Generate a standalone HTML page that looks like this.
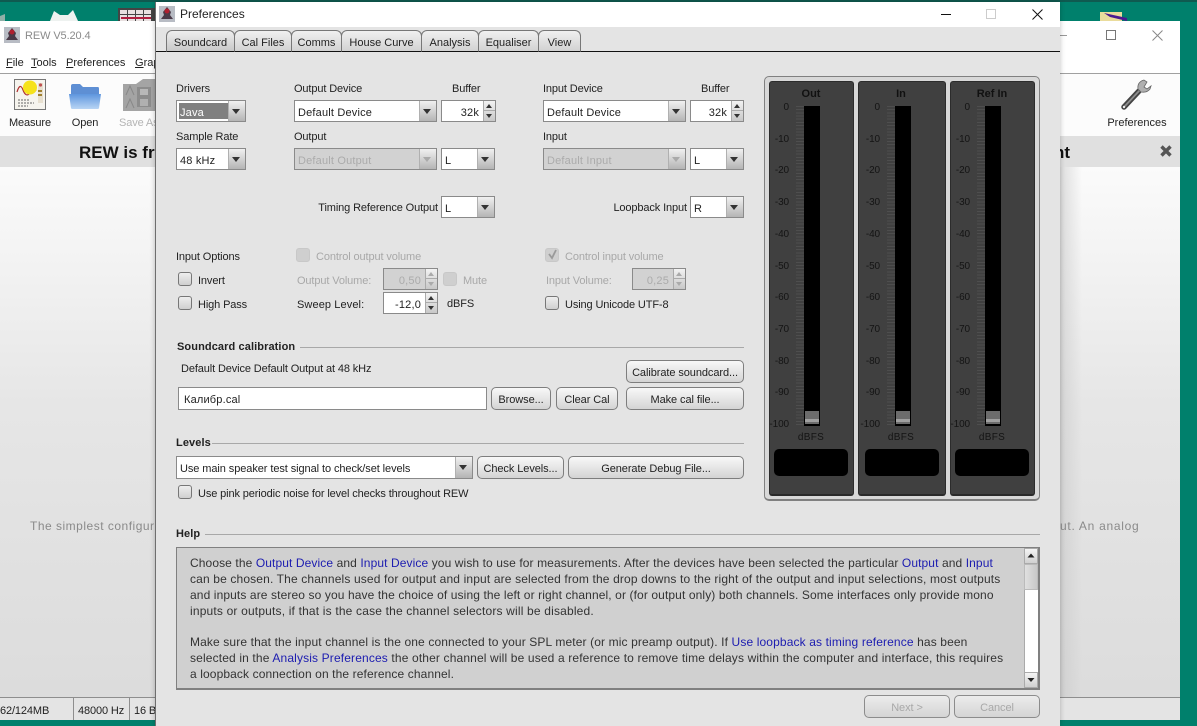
<!DOCTYPE html>
<html><head><meta charset="utf-8"><style>
html,body{margin:0;padding:0}
body{position:relative;width:1197px;height:726px;overflow:hidden;background:#00806c;font:11px "Liberation Sans",Arial,sans-serif;color:#222;-webkit-font-smoothing:antialiased}
div,span{position:absolute;box-sizing:border-box;white-space:nowrap}
svg{position:absolute;overflow:visible}
.t{line-height:14px;height:14px;letter-spacing:-.12px;margin-top:1px}
.d{color:#a8a8a8}
.c{text-align:center}
.r{text-align:right}
.combo{background:#fff;border:1px solid #8a8a8a;height:22px;line-height:24px;padding-left:3px;letter-spacing:.18px}
.combo.dis{background:#d2d2d2;color:#ababab}
.ar{right:0;top:0;width:17px;height:20px;background:linear-gradient(#f0f0f0,#b4b4b4);border-left:1px solid #b0b0b0}
.ar:after{content:"";position:absolute;left:3px;top:8px;border:4.5px solid transparent;border-top:5px solid #333;border-bottom:0}
.dis .ar:after{border-top-color:#aaa}
.sp{background:#fff;border:1px solid #8a8a8a;height:22px;line-height:24px;text-align:right;letter-spacing:.18px}
.sp.dis{background:#d2d2d2;color:#ababab}
.spb{right:0;top:0;width:12px;height:20px;background:linear-gradient(#f2f2f2,#c8c8c8);border-left:1px solid #aaa}
.spb:before{content:"";position:absolute;left:2px;top:3px;border:3px solid transparent;border-bottom:4px solid #333;border-top:0}
.spb:after{content:"";position:absolute;left:2px;top:13px;border:3px solid transparent;border-top:4px solid #333;border-bottom:0}
.spb i{position:absolute;left:0;right:0;top:9px;height:1px;background:#aaa}
.dis .spb:before{border-bottom-color:#aaa}.dis .spb:after{border-top-color:#aaa}
.cb{width:14px;height:14px;border:1px solid #777;border-radius:3px;background:linear-gradient(#eee,#cfcfcf)}
.cb.dis{border-color:#c8c8c8;background:#cfcfcf}
.btn{border:1px solid #7e7e7e;border-radius:5px;background:linear-gradient(#f8f8f8,#d4d4d4);text-align:center;line-height:25px;height:23px;letter-spacing:-.08px}
.btn.dis{color:#a8a8a8;border-color:#8c8c8c;background:linear-gradient(#ececec,#d4d4d4)}
.tab{top:30px;height:22px;border:1px solid #777;border-bottom:1px solid #111;border-radius:6px 6px 0 0;background:linear-gradient(#f0f0f0,#d2d2d2);text-align:center;line-height:24px;letter-spacing:0;border-top-right-radius:6px}
.h{font-weight:bold;letter-spacing:.1px;color:#222}
.ln{height:1px;background:#a8a8a8}
.hl{left:190px;line-height:16px;height:16px;font-size:12px;letter-spacing:.11px;color:#333}
b.l{font-weight:normal;color:#1c1cb0}
.panel{top:81px;height:415px;background:#404040;border:1px solid #2c2c2c;border-bottom:2px solid #2a2a2a;border-radius:3px}
.m{font-size:10px;color:#141414;line-height:12px;height:12px;text-align:right;width:24px;letter-spacing:-.1px;margin-top:1px}
.bar{top:106px;width:16px;height:320px;background:#000}
.hd{top:411px;width:14px;height:13px;background:linear-gradient(#6c6c6c 0,#6c6c6c 8px,#a0a0a0 8px,#a0a0a0 11px,#6c6c6c 11px)}
.tk{top:106px;width:8px;height:319px;background:repeating-linear-gradient(#4e4e4e 0,#4e4e4e 1px,transparent 1px,transparent 3.18px)}
.box{top:449px;width:74px;height:27px;background:#000;border-radius:5px}
.db{top:432px;width:60px;text-align:center;font-size:10px;letter-spacing:.3px;color:#141414;line-height:12px}
.mt{font-weight:bold;color:#111;width:60px;text-align:center;top:88px;line-height:13px}
</style></head><body>

<!-- desktop -->
<div style="left:0;top:0;width:1197px;height:2px;background:#0f5a50"></div>
<svg style="left:0;top:0" width="1197" height="21"><path d="M50 21 L54 11 L60 15 L68 15 L73 10 L78 21Z" fill="#eef2f0"/><rect x="118" y="8" width="38" height="13" fill="#444"/><path d="M120 10h7v4h-7zM128 10h7v4h-7zM136 10h7v4h-7zM144 10h7v4h-7zM120 15h7v6h-7zM128 15h7v6h-7zM136 15h7v6h-7zM144 15h7v6h-7z" fill="#e8e0e0"/><rect x="121" y="17" width="30" height="2" fill="#b02040"/><rect x="1100" y="12" width="22" height="9" fill="#eadc9c"/><path d="M1104 13 L1127 18 L1127 21 L1110 17Z" fill="#4a1a90"/><path d="M0 16 L5 14 V21 H0Z" fill="#90b0a8"/></svg>

<!-- main REW window -->
<div style="left:0;top:21px;width:1180px;height:699px;background:#fff"></div>
<svg style="left:4px;top:27px" width="16" height="16"><rect width="16" height="16" fill="#b8bcc4"/><path d="M8 1 L12 6 L11 9 L14 13 H2 L5 9 L4 6Z" fill="#4a3a48"/><circle cx="8" cy="5" r="2.5" fill="#b02030"/></svg>
<div class="t" style="left:25px;top:28px;font-size:11px;color:#8a8a8a;letter-spacing:-.1px">REW V5.20.4</div>
<div style="left:1057px;top:35px;width:10px;height:1px;background:#999"></div>
<div style="left:1106px;top:30px;width:10px;height:10px;border:1px solid #777"></div>
<svg style="left:1152px;top:30px" width="11" height="11"><path d="M.5 .5L10.5 10.5M10.5 .5L.5 10.5" stroke="#888"/></svg>
<div class="t" style="left:6px;top:55px;letter-spacing:0"><u>F</u>ile</div>
<div class="t" style="left:31px;top:55px;letter-spacing:0"><u>T</u>ools</div>
<div class="t" style="left:66px;top:55px;letter-spacing:0"><u>P</u>references</div>
<div class="t" style="left:135px;top:55px;letter-spacing:0"><u>G</u>raph</div>
<div style="left:0;top:73px;width:1180px;height:1px;background:#a0a0a0"></div>
<div style="left:0;top:74px;width:1180px;height:62px;background:#fcfcfc"></div>

<!-- Measure icon -->
<svg style="left:14px;top:79px" width="32" height="32"><rect x=".5" y=".5" width="31" height="30" fill="#f6f4ee" stroke="#777"/><path d="M3 13 Q6 3 9 11 T16 14 T22 12" fill="none" stroke="#b03030" stroke-width="1.2"/><path d="M4 21h12M4 24h16M4 27h10" stroke="#666" stroke-dasharray="2 1"/><rect x="24" y="4" width="5" height="20" fill="#e8e0d0"/><circle cx="26.5" cy="6" r="1.6" fill="#c05050"/><path d="M24 12h4M24 16h4" stroke="#a08030" stroke-width="2"/><circle cx="16" cy="8.5" r="7" fill="#f6e21a"/></svg>
<div class="t c" style="left:4px;top:115px;width:52px">Measure</div>
<!-- Open icon -->
<svg style="left:69px;top:83px" width="32" height="28"><path d="M2 3 Q2 1 4 1 H11 L14 4 H29 Q30 4 30 6 V14 H2Z" fill="#5e8fd4"/><path d="M0 11 H32 L30 25 Q30 26 28 26 H4 Q2 26 2 25Z" fill="url(#fo)"/><defs><linearGradient id="fo" x1="0" y1="0" x2="0" y2="1"><stop offset="0" stop-color="#5e96de"/><stop offset="1" stop-color="#b8d4f4"/></linearGradient></defs></svg>
<div class="t c" style="left:59px;top:115px;width:52px">Open</div>
<!-- Save icon -->
<svg style="left:123px;top:79px" width="33" height="32"><path d="M0 5 H13 L20 0 H33 V32 H0Z" fill="#a4a4a4"/><path d="M3 16 L7 7 L11 16M3 29 L7 20 L11 29" fill="none" stroke="#888"/><rect x="14" y="8" width="14" height="20" fill="#8c8c8c"/><rect x="17" y="20" width="8" height="7" fill="#b0b0b0"/><rect x="17" y="10" width="8" height="6" fill="#b8b8b8"/></svg>
<div class="t" style="left:119px;top:115px;color:#b4b4b4">Save As</div>
<!-- Wrench -->
<svg style="left:1120px;top:78px" width="34" height="34"><path d="M4 29 L19 13" stroke="#444" stroke-width="5.5" stroke-linecap="round"/><path d="M5 28 L19 13" stroke="#8e8e8e" stroke-width="1.8" stroke-linecap="round"/><path d="M24 2 Q17 4 18 11 L21 14 Q27 15 30 11 L31 8 L27 11 L24 9 L27 4Z" fill="#b0b0b0" stroke="#666" stroke-width=".8"/><circle cx="4" cy="29" r="1.2" fill="#eee"/></svg>
<div class="t c" style="left:1102px;top:115px;width:70px;letter-spacing:0">Preferences</div>

<!-- grey band -->
<div style="left:0;top:136px;width:1180px;height:31px;background:#e0e0e0"></div>
<div style="left:79px;top:143px;font-size:17px;font-weight:bold;color:#111;line-height:20px">REW is free</div>
<div style="left:1054px;top:143px;font-size:17px;font-weight:bold;color:#111;line-height:20px">nt</div>
<svg style="left:1160px;top:145px" width="12" height="12"><path d="M1.5 1.5L10.5 10.5M10.5 1.5L1.5 10.5" stroke="#555" stroke-width="3.4"/></svg>
<!-- body -->
<div style="left:0;top:167px;width:1180px;height:530px;background:linear-gradient(#fbfbfb 0,#e6e6e6 45%,#dcdcdc 100%)"></div>
<div style="left:1060px;top:167px;width:22px;height:530px;background:linear-gradient(90deg,rgba(200,200,200,.6),rgba(220,220,220,0))"></div>
<div style="left:30px;top:519px;font-size:12px;color:#8a8a8a;line-height:15px;letter-spacing:.5px">The simplest configuration</div>
<div style="left:1060px;top:519px;font-size:12px;color:#8a8a8a;line-height:15px;letter-spacing:.72px">ut. An analog</div>
<div style="left:0;top:697px;width:1180px;height:23px;background:#e4e4e4;border-top:1px solid #8e8e8e"></div>
<div style="left:73px;top:697px;width:1px;height:23px;background:#8e8e8e"></div>
<div style="left:129px;top:697px;width:1px;height:23px;background:#8e8e8e"></div>
<div class="t" style="left:0;top:703px">62/124MB</div>
<div class="t" style="left:78px;top:703px">48000 Hz</div>
<div class="t" style="left:134px;top:703px">16 Bit</div>

<!-- Preferences dialog -->
<div style="left:155px;top:2px;width:905px;height:724px;background:#e4e4e4;border-left:1px solid #6e6e6e;box-shadow:0 0 5px rgba(0,0,0,.25)"></div>
<div style="left:156px;top:2px;width:904px;height:25px;background:#fff"></div>
<svg style="left:159px;top:6px" width="16" height="16"><rect width="16" height="16" fill="#b8bcc4"/><path d="M8 1 L12 6 L11 9 L14 13 H2 L5 9 L4 6Z" fill="#4a3a48"/><circle cx="8" cy="5" r="2.5" fill="#b02030"/></svg>
<div class="t" style="left:180px;top:6px;font-size:12px;letter-spacing:0;color:#222">Preferences</div>
<div style="left:941px;top:14px;width:10px;height:1px;background:#111"></div>
<div style="left:986px;top:9px;width:10px;height:10px;border:1px solid #ccc"></div>
<svg style="left:1032px;top:9px" width="11" height="11"><path d="M.5 .5L10.5 10.5M10.5 .5L.5 10.5" stroke="#111"/></svg>

<div style="left:156px;top:51px;width:904px;height:1px;background:#111"></div>
<div class="tab" style="left:166px;width:69px;background:linear-gradient(#eee,#c8c8c8)">Soundcard</div>
<div class="tab" style="left:234px;width:58px">Cal Files</div>
<div class="tab" style="left:291px;width:51px">Comms</div>
<div class="tab" style="left:341px;width:81px">House Curve</div>
<div class="tab" style="left:421px;width:58px">Analysis</div>
<div class="tab" style="left:478px;width:61px">Equaliser</div>
<div class="tab" style="left:538px;width:43px">View</div>

<div class="t" style="left:176px;top:81px">Drivers</div>
<div class="combo" style="left:176px;top:100px;width:70px;color:#fff"><span style="left:2px;top:2px;width:49px;height:16px;background:#808080;line-height:20px;padding-left:1px;overflow:hidden">Java</span><span class="ar"></span></div>
<div class="t" style="left:176px;top:129px">Sample Rate</div>
<div class="combo" style="left:176px;top:148px;width:70px">48 kHz<span class="ar"></span></div>

<div class="t" style="left:294px;top:81px">Output Device</div>
<div class="t" style="left:452px;top:81px">Buffer</div>
<div class="combo" style="left:294px;top:100px;width:143px">Default Device<span class="ar"></span></div>
<div class="sp" style="left:441px;top:100px;width:55px;padding-right:16px">32k<span class="spb"><i></i></span></div>
<div class="t" style="left:294px;top:129px">Output</div>
<div class="combo dis" style="left:294px;top:148px;width:143px">Default Output<span class="ar"></span></div>
<div class="combo" style="left:441px;top:148px;width:54px">L<span class="ar"></span></div>
<div class="t r" style="left:290px;top:200px;width:148px">Timing Reference Output</div>
<div class="combo" style="left:441px;top:196px;width:54px">L<span class="ar"></span></div>

<div class="t" style="left:543px;top:81px">Input Device</div>
<div class="t" style="left:701px;top:81px">Buffer</div>
<div class="combo" style="left:543px;top:100px;width:143px">Default Device<span class="ar"></span></div>
<div class="sp" style="left:690px;top:100px;width:54px;padding-right:16px">32k<span class="spb"><i></i></span></div>
<div class="t" style="left:543px;top:129px">Input</div>
<div class="combo dis" style="left:543px;top:148px;width:143px">Default Input<span class="ar"></span></div>
<div class="combo" style="left:690px;top:148px;width:54px">L<span class="ar"></span></div>
<div class="t r" style="left:590px;top:200px;width:97px">Loopback Input</div>
<div class="combo" style="left:690px;top:196px;width:54px">R<span class="ar"></span></div>

<div class="t" style="left:176px;top:249px">Input Options</div>
<div class="cb" style="left:178px;top:272px"></div>
<div class="t" style="left:198px;top:273px">Invert</div>
<div class="cb" style="left:178px;top:296px"></div>
<div class="t" style="left:198px;top:297px">High Pass</div>

<div class="cb dis" style="left:296px;top:248px"></div>
<div class="t d" style="left:316px;top:249px">Control output volume</div>
<div class="t d" style="left:297px;top:273px">Output Volume:</div>
<div class="sp dis" style="left:383px;top:268px;width:55px;padding-right:16px">0,50<span class="spb"><i></i></span></div>
<div class="cb dis" style="left:443px;top:272px"></div>
<div class="t d" style="left:463px;top:273px">Mute</div>
<div class="t" style="left:297px;top:297px;letter-spacing:.1px">Sweep Level:</div>
<div class="sp" style="left:383px;top:292px;width:55px;padding-right:16px">-12,0<span class="spb"><i></i></span></div>
<div class="t" style="left:447px;top:296px">dBFS</div>

<div class="cb dis" style="left:545px;top:248px"></div>
<svg style="left:547px;top:249px" width="11" height="11"><path d="M2 5 L5 9 L9 1" fill="none" stroke="#9a9a9a" stroke-width="1.8"/></svg>
<div class="t d" style="left:565px;top:249px">Control input volume</div>
<div class="t d" style="left:546px;top:273px">Input Volume:</div>
<div class="sp dis" style="left:632px;top:268px;width:54px;padding-right:16px">0,25<span class="spb"><i></i></span></div>
<div class="cb" style="left:545px;top:296px"></div>
<div class="t" style="left:565px;top:297px">Using Unicode UTF-8</div>

<div class="t h" style="left:177px;top:339px">Soundcard calibration</div>
<div class="ln" style="left:300px;top:347px;width:444px"></div>
<div class="t" style="left:181px;top:361px">Default Device Default Output at 48 kHz</div>
<div class="btn" style="left:626px;top:360px;width:118px">Calibrate soundcard...</div>
<div style="left:178px;top:387px;width:309px;height:23px;background:#fff;border:1px solid #8a8a8a;line-height:25px;padding-left:5px;letter-spacing:.18px">Калибр.cal</div>
<div class="btn" style="left:491px;top:387px;width:60px">Browse...</div>
<div class="btn" style="left:556px;top:387px;width:62px">Clear Cal</div>
<div class="btn" style="left:626px;top:387px;width:118px">Make cal file...</div>

<div class="t h" style="left:176px;top:435px">Levels</div>
<div class="ln" style="left:212px;top:443px;width:532px"></div>
<div class="combo" style="left:176px;top:456px;width:297px;height:23px;line-height:25px;letter-spacing:-.08px">Use main speaker test signal to check/set levels<span class="ar" style="height:21px"></span></div>
<div class="btn" style="left:477px;top:456px;width:87px">Check Levels...</div>
<div class="btn" style="left:568px;top:456px;width:176px">Generate Debug File...</div>
<div class="cb" style="left:178px;top:485px"></div>
<div class="t" style="left:198px;top:486px">Use pink periodic noise for level checks throughout REW</div>

<!-- Meters -->
<div style="left:764px;top:76px;width:276px;height:425px;background:#d8d8d8;border:1px solid #808080;border-bottom:2px solid #808080;border-radius:5px"></div>
<div class="panel" style="left:769px;width:85px"></div>
<div class="panel" style="left:858px;width:88px"></div>
<div class="panel" style="left:950px;width:85px"></div>
<div class="mt" style="left:781px">Out</div><div class="mt" style="left:871px">In</div><div class="mt" style="left:962px">Ref In</div>

<div class="tk" style="left:796px"></div><div class="tk" style="left:887px"></div><div class="tk" style="left:977px"></div>
<div class="bar" style="left:804px"></div><div class="bar" style="left:895px"></div><div class="bar" style="left:985px"></div>
<div class="hd" style="left:805px"></div><div class="hd" style="left:896px"></div><div class="hd" style="left:986px"></div>

<div class="m" style="left:765px;top:101px">0</div><div class="m" style="left:765px;top:133px">-10</div><div class="m" style="left:765px;top:164px">-20</div><div class="m" style="left:765px;top:196px">-30</div><div class="m" style="left:765px;top:228px">-40</div><div class="m" style="left:765px;top:260px">-50</div><div class="m" style="left:765px;top:291px">-60</div><div class="m" style="left:765px;top:323px">-70</div><div class="m" style="left:765px;top:355px">-80</div><div class="m" style="left:765px;top:386px">-90</div><div class="m" style="left:765px;top:418px">-100</div>
<div class="m" style="left:856px;top:101px">0</div><div class="m" style="left:856px;top:133px">-10</div><div class="m" style="left:856px;top:164px">-20</div><div class="m" style="left:856px;top:196px">-30</div><div class="m" style="left:856px;top:228px">-40</div><div class="m" style="left:856px;top:260px">-50</div><div class="m" style="left:856px;top:291px">-60</div><div class="m" style="left:856px;top:323px">-70</div><div class="m" style="left:856px;top:355px">-80</div><div class="m" style="left:856px;top:386px">-90</div><div class="m" style="left:856px;top:418px">-100</div>
<div class="m" style="left:946px;top:101px">0</div><div class="m" style="left:946px;top:133px">-10</div><div class="m" style="left:946px;top:164px">-20</div><div class="m" style="left:946px;top:196px">-30</div><div class="m" style="left:946px;top:228px">-40</div><div class="m" style="left:946px;top:260px">-50</div><div class="m" style="left:946px;top:291px">-60</div><div class="m" style="left:946px;top:323px">-70</div><div class="m" style="left:946px;top:355px">-80</div><div class="m" style="left:946px;top:386px">-90</div><div class="m" style="left:946px;top:418px">-100</div>

<div class="db" style="left:781px">dBFS</div><div class="db" style="left:871px">dBFS</div><div class="db" style="left:962px">dBFS</div>
<div class="box" style="left:774px"></div><div class="box" style="left:865px"></div><div class="box" style="left:955px"></div>

<!-- Help -->
<div class="t h" style="left:176px;top:526px">Help</div>
<div class="ln" style="left:205px;top:534px;width:835px"></div>
<div style="left:176px;top:547px;width:864px;height:143px;background:#d0d0d0;border:1px solid #808080;border-right-width:2px;border-bottom-width:2px"></div>
<div class="hl" style="top:555px;letter-spacing:.1px">Choose the <b class="l">Output Device</b> and <b class="l">Input Device</b> you wish to use for measurements. After the devices have been selected the particular <b class="l">Output</b> and <b class="l">Input</b></div>
<div class="hl" style="top:571px;letter-spacing:.145px">can be chosen. The channels used for output and input are selected from the drop downs to the right of the output and input selections, most outputs</div>
<div class="hl" style="top:587px">and inputs are stereo so you have the choice of using the left or right channel, or (for output only) both channels. Some interfaces only provide mono</div>
<div class="hl" style="top:603px;letter-spacing:.175px">inputs or outputs, if that is the case the channel selectors will be disabled.</div>
<div class="hl" style="top:634px;letter-spacing:.125px">Make sure that the input channel is the one connected to your SPL meter (or mic preamp output). If <b class="l">Use loopback as timing reference</b> has been</div>
<div class="hl" style="top:650px;letter-spacing:.143px">selected in the <b class="l">Analysis Preferences</b> the other channel will be used a reference to remove time delays within the computer and interface, this requires</div>
<div class="hl" style="top:666px">a loopback connection on the reference channel.</div>

<div style="left:1024px;top:548px;width:14px;height:140px;background:#fff;border-left:1px solid #aaa"></div>
<div style="left:1024px;top:548px;width:14px;height:16px;background:linear-gradient(#f4f4f4,#d0d0d0);border:1px solid #aaa"></div>
<div style="left:1024px;top:564px;width:14px;height:26px;background:linear-gradient(90deg,#e0e0e0,#c8c8c8);border:1px solid #bbb"></div>
<div style="left:1024px;top:672px;width:14px;height:16px;background:linear-gradient(#f4f4f4,#d0d0d0);border:1px solid #aaa"></div>
<svg style="left:1024px;top:548px" width="14" height="140"><path d="M3.5 9.5 L7 5.5 L10.5 9.5Z M3.5 130 L10.5 130 L7 134Z" fill="#222"/></svg>

<div class="btn dis" style="left:864px;top:695px;width:86px">Next &gt;</div>
<div class="btn dis" style="left:954px;top:695px;width:86px">Cancel</div>
</body></html>
